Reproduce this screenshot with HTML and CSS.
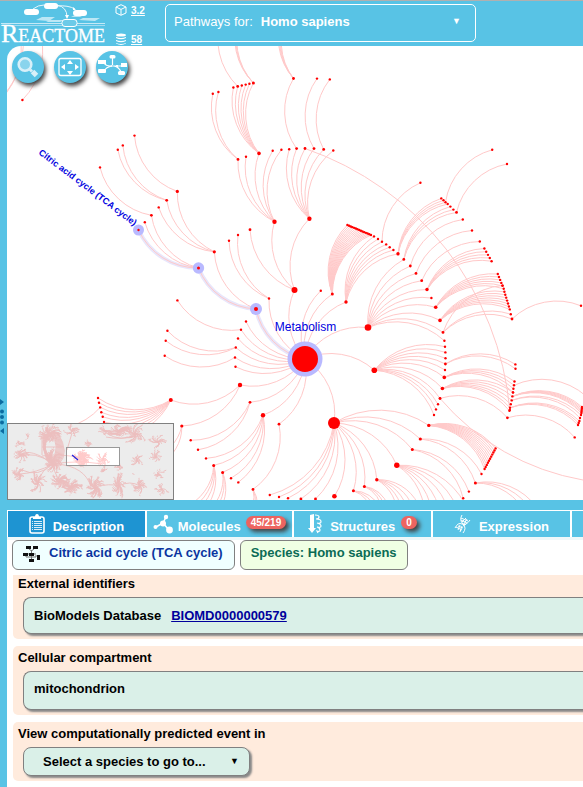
FILE: index.html
```html
<!DOCTYPE html>
<html lang="en">
<head>
<meta charset="utf-8">
<title>Reactome Pathway Browser</title>
<link rel="stylesheet" href="styles.css">
</head>
<body>
<header class="header">
  <a class="logo" href="#" aria-label="Reactome">
    <svg class="logo-art" width="106" height="26" viewBox="0 0 106 26" aria-hidden="true">
      <path d="M1 22.500H62M77 22.500H105" stroke="#c4e9f6" stroke-width="1"/>
      <path d="M1 24.500H105" stroke="#a4dbf0" stroke-width="1"/>
      <path d="M36 19l6-3h13l-6 4zM46 21l4-2h14l-4 2zM79 19l4-2h17l-5 3zM71 16l4-2h9l-4 2z" fill="#fff" opacity=".6"/>
      <path d="M33 8Q38 4 44 4M57 4Q67 6 67 16M57 5Q68 4 75 8" fill="none" stroke="#e9f7fc"/>
      <path d="M76 9l-3-3v3zM67 18l-2-4h4z" fill="#fff"/>
      <rect x="24" y="8" width="15" height="6" rx="3" fill="#fff"/>
      <rect x="44" y="2" width="14" height="6" rx="3" fill="#fff"/>
      <rect x="73" y="9" width="14" height="6" rx="3" fill="#fff"/>
      <rect x="62" y="18.500" width="15" height="7" rx="3" fill="#6ccae8" stroke="#fff"/>
    </svg>
    <span class="logo-text"><span class="logo-initial">R</span>EACTOME</span>
  </a>
  <nav class="versions">
    <a href="#"><svg width="12" height="12" viewBox="0 0 12 12" fill="none" stroke="#fff" aria-hidden="true"><path d="M6 .7L11 3v6L6 11.3 1 9V3zM1 3l5 2.400L11 3M6 5.400V11"/></svg><span>3.2</span></a>
    <a href="#"><svg width="12" height="12" viewBox="0 0 12 12" aria-hidden="true"><g fill="#fff"><ellipse cx="6" cy="2" rx="5" ry="1.600"/><path d="M1 4q5 2 10 0v1q-5 2.400-10 0zM1 7q5 2 10 0v1q-5 2.400-10 0zM1 10q5 2 10 0v.6q-5 2.600-10 0z"/></g></svg><span>58</span></a>
  </nav>
  <div class="species-box">
    <label for="species">Pathways for:</label>
    <select id="species" class="species-select"><option>Homo sapiens</option></select>
    <span class="arrow" aria-hidden="true">▼</span>
  </div>
</header>

<div class="workspace">
  <div class="splitter" aria-hidden="true">
    <svg width="4" height="38" viewBox="0 0 4 38" fill="#0b6ca1"><path d="M0 3l4 3-4 3zM4 32L0 35l4 3z"/><circle cx="2" cy="15.500" r="2"/><circle cx="2" cy="21" r="2"/><circle cx="2" cy="26.500" r="2"/></svg>
  </div>
  <div class="content">
    <main class="diagram">
      <svg class="graph" role="img" aria-label="Metabolism pathways">
        <g transform="translate(-7 -46)">
          <g id="trails"></g>
          <g id="edges"></g>
          <g id="halos"></g>
          <g id="nodes"></g>
          <text class="label-root" x="305.500" y="331">Metabolism</text>
          <text class="label-leaf" transform="translate(134 226) rotate(37)">Citric acid cycle (TCA cycle)</text>
        </g>
      </svg>
      <div class="tools">
        <button class="tool" aria-label="Search"><svg width="32" height="32" viewBox="0 0 32 32"><circle cx="13" cy="13.500" r="6.300" fill="#8ad4ed" stroke="#d8f0f9" stroke-width="2.600"/><path d="M18 18.500l2 2" stroke="#d8f0f9" stroke-width="3"/><path d="M20.500 20.500l4 4" stroke="#d8f0f9" stroke-width="5"/></svg></button>
        <button class="tool" aria-label="Fit to all"><svg width="32" height="32" viewBox="0 0 32 32"><rect x="5" y="7.500" width="22" height="17" rx="2" fill="none" stroke="#fff" stroke-width="1.300"/><path d="M16 9l3 4h-6zM16 24l3-4h-6zM7 16l4-3v6zM25 16l-4-3v6z" fill="#fff"/></svg></button>
        <button class="tool" aria-label="Open diagram"><svg width="32" height="32" viewBox="0 0 32 32"><path d="M8 12q2 3 6 3h11M8 20q2-4 8-5M16.500 14V6M18 15q5 1 7 6" fill="none" stroke="#fff" stroke-width="1.200"/><g fill="#fff"><rect x="2" y="9" width="8" height="4"/><rect x="2" y="18" width="8" height="4" rx="1"/><rect x="13.500" y="4" width="6" height="3.500" rx="1.500"/><rect x="25" y="12" width="6" height="4"/><rect x="22" y="20" width="7" height="4" rx="1.500"/><path d="M14 15l2-1v2zM20 14h2v2h-2z"/></g></svg></button>
      </div>
      <svg class="minimap" width="167" height="77" viewBox="7 423 167 77" role="img" aria-label="Overview">
        <rect x="7" y="423" width="167" height="77" fill="#fff"/>
        <g id="overview"></g>
        <path class="overview-shade" fill-rule="evenodd" d="M7 423h167v77H7zM67 447.500h53v18H67z"/>
        <rect x="66.500" y="447.500" width="53" height="18" fill="none" stroke="#999"/>
        <path d="M72 455l6 5" stroke="#2222dd" stroke-width="1.200"/>
        <rect x="7.500" y="423.500" width="166" height="76" fill="none" stroke="#808080"/>
      </svg>
    </main>

    <div class="tabs" role="tablist">
      <button class="tab active" role="tab" aria-selected="true"><svg width="16" height="20" viewBox="0 0 16 20"><rect x="1" y="3" width="14" height="16" rx="2" fill="none" stroke="#fff" stroke-width="1.600"/><path d="M4 5V3h2q0-3 2-3t2 3h2v2z" fill="#fff"/><path d="M5 7.500h8M5 9.500h8M5 11.500h8M5 13.500h8M5 15.500h8M3 7.500h1M3 9.500h1M3 11.500h1M3 13.500h1M3 15.500h1" stroke="#d8edf8"/></svg><span>Description</span></button>
      <button class="tab wide" role="tab"><svg width="20" height="20" viewBox="0 0 20 20" fill="#fff"><path d="M3 13l7-4 3-6M10 9l6 7" fill="none" stroke="#fff" stroke-width="1.600"/><circle cx="2.500" cy="13" r="2"/><circle cx="10" cy="9.500" r="3"/><circle cx="13" cy="3" r="2.200"/><circle cx="16.500" cy="16" r="3.400"/></svg><span>Molecules</span><span class="badge">45/219</span></button>
      <button class="tab" role="tab"><svg width="14" height="20" viewBox="0 0 14 20"><path d="M2 1l4-1v14h2l-4 5-4-5h2z" fill="#fff"/><path d="M7 1q4 0 4 2t-3 2q5 0 5 2.500t-4 1.500q4 1 4 3t-4 1q3 1 3 3t-3 1l1 2" fill="none" stroke="#fff" stroke-width="1.200"/></svg><span>Structures</span><span class="badge">0</span></button>
      <button class="tab" role="tab"><svg width="17" height="20" viewBox="0 0 17 20" fill="none" stroke="#fff"><path d="M8 1Q5 6 9 10T9 19M16 6Q12 12 8 10T1 14M7 4l7 3M7 6l6 3M8 9l3 2M8 8l4-4M10 10l3-5M2 13l6 3M4 12l5 2M6 11l-2 5M8 12l-2 6M9 12l3-2"/></svg><span>Expression</span></button>
      <div class="tab-rest"></div>
    </div>

    <section class="details">
      <div class="chips">
        <button class="chip pathway"><svg width="17" height="17" viewBox="0 0 17 17"><path d="M5 3L8.500 6 12 3M8.500 5v4M5 9h8M3 9v3h10v-2M8.500 11v4" fill="none" stroke="#777"/><path d="M3 1h5v3H3zM10 1h5v3h-5zM0 8h5v3H0zM6 8h5v3H6zM14 10h3v5h-3zM6 14h5v3H6z" fill="#111"/></svg><span>Citric acid cycle (TCA cycle)</span></button>
        <button class="chip species">Species: Homo sapiens</button>
      </div>
      <section class="panel">
        <h2>External identifiers</h2>
        <div class="box"><span>BioModels Database</span><a href="#">BIOMD0000000579</a></div>
      </section>
      <section class="panel">
        <h2>Cellular compartment</h2>
        <div class="box tall"><span>mitochondrion</span></div>
      </section>
      <section class="panel">
        <h2><label for="predicted">View computationally predicted event in</label></h2>
        <div class="picker">
          <select id="predicted"><option>Select a species to go to...</option></select>
          <span class="arrow" aria-hidden="true">▼</span>
        </div>
      </section>
    </section>
  </div>
</div>
<script src="graph.js"></script>
</body>
</html>
```
FILE: styles.css
```css
* { box-sizing: border-box; }
body {
  margin: 0;
  min-height: 100vh;
  display: flex;
  flex-direction: column;
  background: #58c3e5;
  font: bold 13px/16px "Liberation Sans", Arial, sans-serif;
  color: #000;
  overflow-x: hidden;
}
button, select { font: inherit; color: inherit; margin: 0; }
select { appearance: none; border: 0; background: transparent; padding: 0; }

.header {
  display: flex;
  align-items: flex-start;
  height: 46px;
  border-top: 1px solid #b0b0b0;
  color: #fff;
}
.logo { display: flex; flex-direction: column; width: 115px; color: #fff; text-decoration: none; }
.logo-art { display: block; }
.logo-text {
  display: block;
  padding-left: 1px;
  font: 18px/18px "Liberation Serif", "Times New Roman", serif;
  -webkit-text-stroke: 0.3px #fff;
  white-space: nowrap;
  margin-top: -2px;
}
.logo-initial { font-size: 26px; }
.versions { display: flex; flex-direction: column; gap: 16px; width: 50px; padding-top: 3px; font-size: 10px; line-height: 12px; }
.versions a { display: flex; gap: 4px; color: #fff; }
.versions span { padding-top: 1px; }
.species-box {
  display: flex;
  align-items: center;
  width: 311px;
  height: 38px;
  margin-top: 3px;
  padding: 0 13px 2px 8px;
  border: 1px solid #fff;
  border-radius: 5px;
}
.species-box label { font-weight: normal; }
.species-select { flex: 1; margin-left: 8px; }
.species-select option { color: #000; }
.arrow { font-size: 9px; padding: 0 1px 2px 0; pointer-events: none; }

.workspace { flex: 1; display: flex; }
.splitter { width: 7px; display: flex; padding-top: 350px; }
.content { flex: 1; min-width: 0; display: flex; flex-direction: column; }

.diagram { position: relative; height: 454px; background: #fff; border-top-left-radius: 14px; overflow: hidden; }
.graph { display: block; width: 100%; height: 100%; }
.edge { fill: none; stroke: #ffc9c9; stroke-width: 1; }
.node { fill: #ff0000; }
.halo { fill: #b9b9ff; }
.halo-path { fill: none; stroke: #e8e6fb; stroke-width: 4; }
.label-root { font: 12px "Liberation Sans", Arial, sans-serif; fill: #0000e0; text-anchor: middle; }
.label-leaf { font: bold 9px "Liberation Sans", Arial, sans-serif; fill: #0000e0; text-anchor: end; }
.overview-line { fill: none; stroke: #ffcaca; stroke-width: 0.9; }
.overview-shade { fill: #808080; fill-opacity: 0.15; }
.tools { position: absolute; top: 5px; left: 5px; display: flex; gap: 10px; }
.tool {
  width: 32px;
  height: 32px;
  padding: 0;
  border: 0;
  border-radius: 50%;
  background: #58c3e5;
  box-shadow: 2px 3px 4px #444;
}
.tool svg, .tab svg, .chip svg { display: block; flex: none; }
.minimap { position: absolute; left: 0; bottom: 0; }

.tabs {
  display: flex;
  gap: 2px;
  margin-top: 10px;
  padding: 1px 0 0 1px;
  background: #fff;
  color: #fff;
}
.tab {
  flex: none;
  display: flex;
  align-items: center;
  justify-content: center;
  gap: 8px;
  width: 137px;
  height: 26px;
  padding: 0;
  border: 0;
  background: #58c3e5;
}
.tab > span:not(.badge) { padding-top: 5px; }
.tab.active { background: #1e94d2; }
.tab.wide { width: 145px; gap: 5px; }
.tab-rest { flex: 1; background: #58c3e5; }
.badge {
  padding: 0 5px;
  margin: 0 0 3px -2px;
  border-radius: 7px;
  background: #ed6460;
  font-size: 10px;
  line-height: 13px;
  box-shadow: 3px 3px 4px #444;
}
.wide .badge { margin-left: 0; }

.details { flex: 1; padding: 3px 0 6px 5px; background: linear-gradient(#eef8fa 3px, #fff 3px); }
.chips { display: flex; gap: 5px; margin-bottom: 5px; }
.chip {
  display: flex;
  align-items: center;
  gap: 9px;
  height: 30px;
  padding: 0 10px 4px;
  border: 1px solid #808080;
  border-radius: 6px;
}
.pathway { padding-right: 11px; background: #f0ffff; color: #0a36a0; }
.species { background: #f0ffe4; color: #0b6b55; }
.panel {
  margin: 0 0 7px 1px;
  padding: 1px 0 5px 5px;
  background: #ffebdd;
  border-radius: 5px 0 0 5px;
}
.panel:first-of-type { border-top-left-radius: 0; }
.panel + .panel { padding-top: 4px; }
.panel:last-child { margin-bottom: 0; }
.panel h2 { margin: 0 0 5px; font-size: 13px; line-height: 16px; }
.box, .picker {
  display: flex;
  align-items: center;
  margin-left: 5px;
  border: 1px solid #808080;
  border-radius: 8px;
  background: #daf0e8;
  box-shadow: 2px 2px 2px #888;
}
.box { gap: 10px; height: 37px; padding-left: 10px; border-right: 0; border-radius: 8px 0 0 8px; }
.box.tall { height: 39px; padding-bottom: 3px; }
.box a { color: #00009c; }
.picker { width: 227px; height: 29px; padding: 0 9px 0 19px; }
.picker select { flex: 1; }
```
FILE: graph.js
```js
const SVG = 'http://www.w3.org/2000/svg';

function add(parent, tag, cls, attrs) {
  const el = document.createElementNS(SVG, tag);
  el.setAttribute('class', cls);
  for (const k in attrs) el.setAttribute(k, attrs[k]);
  parent.appendChild(el);
}

// Evenly spaced children between two end points.
function row(x1, y1, x2, y2, n) {
  return Array.from({ length: n }, (_, i) => [
    x1 + (x2 - x1) * i / (n - 1), y1 + (y2 - y1) * i / (n - 1)
  ]);
}

// Each entry: parent x, parent y, children as [x, y, radius].
const tree = [
  [305, 359, [[294.5, 290, 3], [269, 298.5], [256, 309, 2], [246, 321.5], [241, 329.7], [238, 338.5], [235.8, 347.5], [235, 357.5], [235.5, 366.7], [240, 385, 2.2], [250, 402.3, 1.4], [263, 415.2, 2.2], [279, 424.2, 1.4], [334, 423, 6], [374.3, 370.2, 2.8], [368, 327.5, 3.3], [346, 302, 1.7], [332.3, 294, 1.5], [320.8, 290.7]]],
  [269, 298.5, [[229, 240.7], [238, 235]]],
  [294.5, 290, [[250, 229.7, 1.4], [274.5, 221.7, 2.2], [309.4, 218.7, 2.2]]],
  [256, 309, [[198.5, 268, 1.5], [214.3, 251.8, 1.6]]],
  [214.3, 251.8, [[166.7, 200.3, 1.4], [177.3, 191.4, 1.6], [158.7, 207.4]]],
  [166.7, 200.3, [[117.8, 149.7], [122.8, 145.4]]],
  [177.3, 191.4, [[134.5, 135.6]]],
  [198.5, 268, [[138.5, 230], [144.8, 222.3], [151.4, 215.3, 1.4]]],
  [151.4, 215.3, [[100, 167.4]]],
  [241, 329.7, [[177.4, 300.4]]],
  [235.8, 347.5, [[167.4, 330.7], [165.7, 340.7]]],
  [235, 357.5, [[164.7, 355.7]]],
  [240, 385, [[170.8, 400, 2], [181.8, 426, 1.6]]],
  [170.8, 400, [[98, 398], [99, 402.7], [100.2, 407.4], [101.3, 412.3], [102.7, 416.8], [104, 422], [106, 427], [109, 432], [113, 437]]],
  [100.2, 407.4, [[32, 426]]],
  [181.8, 426, [[150, 458], [158, 465]]],
  [250, 402.3, [[190.7, 440.3], [198, 449.8]]],
  [263, 415.2, [[206, 458.4], [213.7, 465.4, 1.5], [222.6, 472.4, 1.5], [231, 478.2], [238.3, 482.4]]],
  [213.7, 465.4, row(183, 508, 200, 514, 4)],
  [222.6, 472.4, row(203, 515, 214, 518, 3)],
  [279, 424.2, [[253, 489.4, 1.4]]],
  [253, 489.4, row(244, 518, 253, 520, 3)],
  [334, 423, [[269.8, 495], [279, 497], [288, 498.2], [300.9, 499, 1.4], [315.5, 499, 1.4], [334.4, 496.3, 2.3], [353.4, 490.8, 1.5], [364.4, 486.4, 1.5], [376.8, 479.7, 1.7], [396.8, 465.3, 2.7], [412.3, 449.5, 1.5], [420.3, 439, 1.6], [428.8, 425.4, 1.7]]],
  [353.4, 490.8, row(380, 508, 372, 514, 3)],
  [364.4, 486.4, row(388, 506, 382, 512, 3)],
  [376.8, 479.7, row(397, 518, 418, 504, 5)],
  [396.8, 465.3, row(424, 523, 465, 504, 6)],
  [412.3, 449.5, [[463.2, 498.3], [468.9, 491.6]]],
  [420.3, 439, [[475.4, 483, 1.5], [481.5, 474]]],
  [475.4, 483, row(537, 508, 527, 516, 3)],
  [428.8, 425.4, row(495.6, 448.4, 484.6, 469, 11)],
  [374.3, 370.2, [[445, 346.7], [445.4, 352.4], [445.5, 358.3], [445.4, 364, 1.4], [445, 370], [444.3, 377.4, 1.8], [442.4, 388.5, 1.8], [440, 398.4, 1.4], [438, 404.3], [436, 409.4], [434, 415]]],
  [445.4, 364, [[515.4, 364.4], [515.5, 368.8]]],
  [444.3, 377.4, [[514.5, 381.5], [514, 385.3], [513.4, 388.7], [513, 392.4]]],
  [442.4, 388.5, [[513, 392.4], [512.4, 396.4], [511.7, 400.4], [510.8, 404.3], [510, 407.8], [509.4, 410.8]]],
  [440, 398.4, [[507.4, 417.8, 1.4]]],
  [507.4, 417.8, [[574.7, 437.4]]],
  [514, 385.3, [[586, 396]]],
  [512.4, 396.4, row(582, 407, 581.4, 413, 5)],
  [511.7, 400.4, row(581, 415, 580, 418, 2)],
  [510, 407.8, row(579.4, 421, 578, 425, 3)],
  [368, 327.5, [[403.8, 259.4, 1.4], [410.3, 266, 1.4], [416, 273.4, 1.4], [421.7, 280.7, 1.4], [427, 289.5, 1.7], [431.4, 298], [435.7, 307.3, 1.8], [440, 320.4, 1.8], [443, 332.4, 1.4], [444.4, 340.8]]],
  [346, 302, [[374, 236.4], [378, 239], [382, 241.7], [386.2, 244.4], [389.7, 247.2], [393.4, 250], [398, 253.8, 1.7]]],
  [332.3, 294, row(347.4, 225, 371, 235, 15)],
  [382, 241.7, [[420.4, 182.8]]],
  [398, 253.8, [[441.3, 198.4], [443.5, 200.3], [445.5, 202.2], [447.7, 204]]],
  [403.8, 259.4, [[450.4, 206.6], [453.4, 209.6], [456.5, 212.4, 1.4]]],
  [445.5, 202.2, [[492.2, 149.8]]],
  [456.5, 212.4, [[507, 164]]],
  [410.3, 266, [[462.8, 219.5]]],
  [416, 273.4, [[472, 230.5]]],
  [421.7, 280.7, [[479.8, 241.5]]],
  [427, 289.5, row(484.4, 248.5, 491.6, 261.2, 5)],
  [435.7, 307.3, row(497.8, 274, 503.7, 288.8, 6)],
  [440, 320.4, row(504.4, 291.8, 509.8, 309.4, 7)],
  [443, 332.4, [[502.5, 285.4], [510.8, 314.2], [512, 319, 1.4]]],
  [512, 319, [[581, 305.8]]],
  [274.5, 221.7, [[238, 159.4, 1.4], [246, 156.7], [259, 153.4, 1.8], [272.7, 150.8], [281.4, 149.7]]],
  [309.4, 218.7, [[289.2, 149.2], [296.6, 148.6, 1.4], [305, 148.5, 1.4], [314, 148.6, 1.4], [323.7, 149.4, 1.4], [333.3, 150.5]]],
  [238, 159.4, [[212.8, 93.8], [218.4, 92]]],
  [259, 153.4, [[233.4, 87.5], [237.7, 86.4, 1.4], [241.8, 85.5], [245.7, 84.6], [249.4, 83.8], [253.4, 83, 1.5]]],
  [237.7, 86.4, [[222, 15]]],
  [253.4, 83, row(239, 15, 242, 15, 3)],
  [293.5, 78.5, row(284, 12, 289, 12, 4)],
  [296.6, 148.6, [[293.5, 78.5, 1.4]]],
  [314, 148.6, [[317, 78.6]]],
  [323.7, 149.4, [[329.8, 79.4]]],
  [305, 148.5, [[509.8, 410]]],
  [583, 480, [[440, 398.4]], 1.6],
  [38, 25, [[22.4, 100]]],
  [17, 25, [[0, 100]]],
  [21, 25, [[-6, 104]]]
];

const edges = document.getElementById('edges');
const nodes = document.getElementById('nodes');
const halos = document.getElementById('halos');
const trails = document.getElementById('trails');

function arc(px, py, x, y, bend) {
  const r = 0.92 * (bend || 1) * Math.hypot(x - px, y - py);
  return `M${px} ${py}A${r} ${r} 0 0 1 ${x} ${y}`;
}

for (const [px, py, kids, bend] of tree) {
  for (const [x, y, r] of kids) {
    add(edges, 'path', 'edge', { d: arc(px, py, x, y, bend) });
    add(nodes, 'circle', 'node', { cx: x, cy: y, r: r || 1.2 });
  }
}
add(nodes, 'circle', 'node', { cx: 305, cy: 359, r: 13 });

for (const p of [[305, 359, 256, 309], [256, 309, 198.5, 268], [198.5, 268, 138.5, 230]]) {
  add(trails, 'path', 'halo-path', { d: arc(...p) });
}
for (const [cx, cy, r] of [[305, 359, 17.5], [256, 309, 6], [198.5, 268, 5.7], [138.5, 230, 5.5]]) {
  add(halos, 'circle', 'halo', { cx, cy, r });
}

// Overview clusters: centre x, centre y, horizontal and vertical reach, branch count.
const clusters = [
  [50, 434, 12, 9, 46], [72, 431, 8, 7, 16], [28, 437, 3, 3, 5], [20, 444, 5, 3, 10],
  [20, 455, 9, 7, 20], [19, 474, 7, 7, 20], [53, 462, 10, 13, 50], [38, 483, 8, 14, 26],
  [60, 481, 9, 8, 45], [72, 487, 10, 8, 45], [95, 487, 10, 12, 46], [119, 486, 6, 14, 32],
  [140, 486, 8, 8, 24], [162, 489, 7, 6, 10], [158, 474, 7, 5, 11], [137, 461, 6, 8, 14],
  [156, 457, 7, 6, 12], [158, 442, 11, 7, 16], [120, 431, 14, 6, 34], [135, 434, 12, 12, 26],
  [106, 431, 8, 6, 12], [89, 443, 5, 3, 10], [81, 457, 8, 7, 50], [84, 460, 8, 7, 30],
  [103, 459, 6, 9, 18], [119, 467, 5, 4, 10], [105, 470, 5, 3, 8], [134, 474, 1, 1, 2]
];
const overview = document.getElementById('overview');
let seed = 7;
const rnd = () => (seed = seed * 16807 % 2147483647) / 2147483647;
for (const [cx, cy, rx, ry, n] of clusters) {
  for (let i = 0; i < n; i++) {
    const a = rnd() * 6.283, k = 0.4 + rnd() * 0.6;
    const x = cx + Math.cos(a) * rx * k, y = cy + Math.sin(a) * ry * k;
    const mx = cx + Math.cos(a - 0.8) * rx * k * 0.6, my = cy + Math.sin(a - 0.8) * ry * k * 0.6;
    add(overview, 'path', 'overview-line', { d: `M${cx} ${cy}Q${mx} ${my} ${x} ${y}m-1 ${rnd() * 2 - 1}l${rnd() * 3} ${rnd() * 3 - 1.5}` });
  }
}
for (let i = 0; i < 9; i++) {
  add(overview, 'path', 'overview-line', { d: `M${50 + i} 433Q${62 + i} ${445 + i} ${51 + i} 464` });
  add(overview, 'path', 'overview-line', { d: `M${44 + i} 434Q${40 - i / 2} 448 ${50 + i} 466` });
}
for (const d of ['M53 464Q30 447 20 455', 'M53 464Q35 450 18 457', 'M53 464Q36 473 20 474', 'M53 464Q38 478 22 470', 'M53 464Q42 468 38 483', 'M42 455V435Q50 425 60 437', 'M42 447H62M42 456Q60 453 80 458', 'M56 464Q85 466 91 487', 'M53 464Q75 460 103 464', 'M66 483Q55 480 53 464', 'M95 487Q110 483 119 486', 'M119 486Q130 480 140 486', 'M67 450L72 433', 'M106 431Q116 437 124 433', 'M106 433Q122 443 135 434', 'M106 437Q120 440 138 436']) {
  add(overview, 'path', 'overview-line', { d });
}
```
